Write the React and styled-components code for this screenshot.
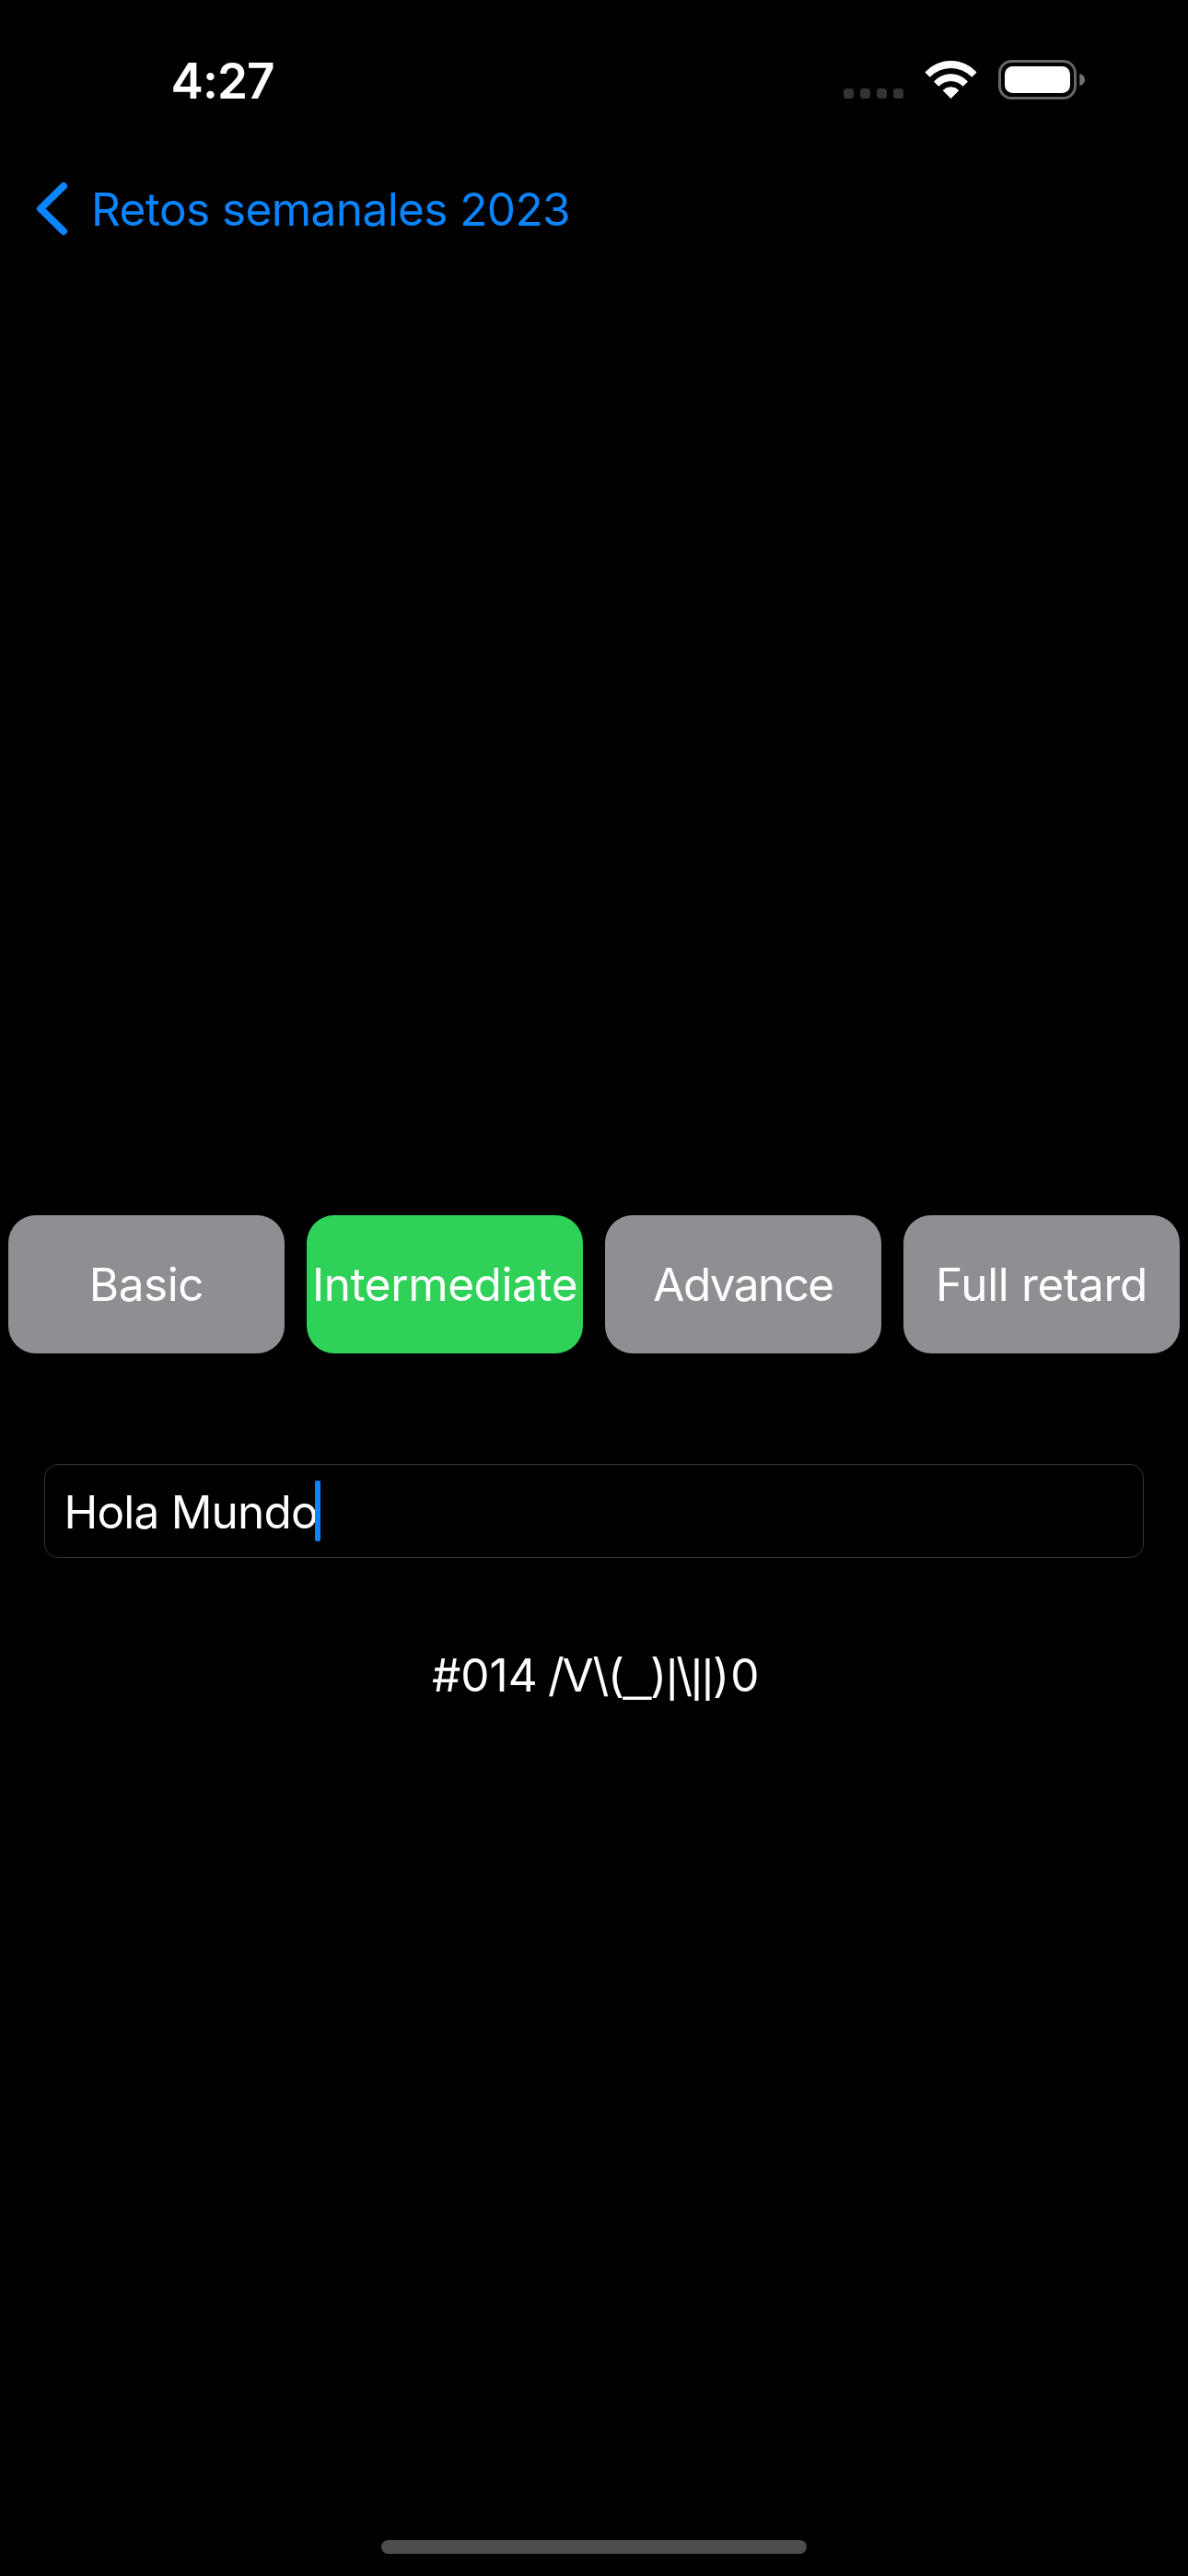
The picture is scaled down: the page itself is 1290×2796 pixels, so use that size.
import React from "react";
import styled, { createGlobalStyle } from "styled-components";

const GlobalStyle = createGlobalStyle`
  *, *::before, *::after { box-sizing: border-box; }
  body {
    margin: 0;
    background: #000;
    color: #fff;
    font-family: Inter, "Liberation Sans", sans-serif;
    font-size: 49.5px;
    font-weight: 400;
  }
`;

const Screen = styled.div`
  display: flex;
  flex-direction: column;
  width: 1290px;
  height: 2796px;
  background: #000;
  overflow: hidden;
`;

const StatusBar = styled.header`
  display: flex;
  align-items: center;
  justify-content: space-between;
  height: 174px;
  padding: 0 111px 0 185.5px;
`;

const Time = styled.time`
  padding-top: 1px;
  font-size: 53px;
  font-weight: 600;
  letter-spacing: -0.9px;
  line-height: 64px;
`;

const StatusIcons = styled.div`
  display: flex;
  align-items: flex-start;
  height: 44px;
`;

const SignalDots = styled.div`
  display: flex;
  gap: 7px;
  margin: 31px 23px 0 0;
`;

const Dot = styled.span`
  width: 11px;
  height: 11px;
  border-radius: 3.5px;
  background: #333;
`;

const WifiSvg = styled.svg`
  display: block;
  width: 57px;
  height: 43px;
  margin-right: 23px;
`;

const BatterySvg = styled.svg`
  display: block;
  width: 95px;
  height: 43px;
`;

const NavBar = styled.nav`
  display: flex;
  align-items: center;
  height: 106px;
  padding-left: 39px;
  color: #0a84ff;
`;

const BackButton = styled.button`
  display: flex;
  align-items: center;
  gap: 25px;
  padding: 0;
  border: 0;
  background: none;
  color: inherit;
  font: inherit;
  letter-spacing: -0.58px;
  line-height: 60px;
  white-space: nowrap;
`;

const ChevronSvg = styled.svg`
  display: block;
  width: 35px;
  height: 60px;
`;

const Main = styled.main`
  display: flex;
  flex-direction: column;
  align-items: center;
  padding-top: 1039px;
`;

const LevelRow = styled.div`
  display: flex;
  gap: 24px;
`;

const LevelButton = styled.button`
  display: flex;
  align-items: center;
  justify-content: center;
  width: 300px;
  height: 150px;
  padding: 0;
  border: 0;
  border-radius: 30px;
  background: ${(p) => (p.$active ? "#30d158" : "#8e8e93")};
  color: #fff;
  font: inherit;
  letter-spacing: ${(p) => p.$tracking}px;
  line-height: 60px;
  white-space: nowrap;
`;

const Field = styled.div`
  display: flex;
  align-items: center;
  width: 1194px;
  height: 102px;
  margin-top: 120px;
  padding-left: 20.5px;
  border: 1px solid #333335;
  border-radius: 15px;
`;

const FieldText = styled.span`
  padding-top: 2px;
  letter-spacing: -0.8px;
  line-height: 60px;
  white-space: nowrap;
`;

const Caret = styled.span`
  width: 6px;
  height: 66px;
  margin-left: -3px;
  border-radius: 2px;
  background: #0a84ff;
`;

const Result = styled.p`
  height: 60px;
  margin: 97px 0 0;
  padding-left: 3.5px;
  font-kerning: none;
  line-height: 60px;
  white-space: pre;
`;

const Run = styled.span`
  letter-spacing: ${(p) => p.$tracking}px;
`;

const Bar = styled(Run)`
  font-family: "Liberation Sans", sans-serif;
  line-height: 0;
`;

const Underscore = styled(Run)`
  font-family: "Liberation Sans", sans-serif;
  font-size: 54px;
  line-height: 0;
  vertical-align: 2px;
`;

const HomeArea = styled.footer`
  display: flex;
  justify-content: center;
  margin-top: auto;
  padding-bottom: 24px;
`;

const HomeIndicator = styled.div`
  width: 462px;
  height: 15px;
  border-radius: 8px;
  background: #4c4c4c;
`;

const levels = [
  { name: "Basic", tracking: -0.45 },
  { name: "Intermediate", tracking: -0.44 },
  { name: "Advance", tracking: -1.6 },
  { name: "Full retard", tracking: -0.35 },
];

function WifiIcon() {
  return (
    <WifiSvg viewBox="0 0 57 43" fill="#fff" stroke="#fff" strokeWidth="1" strokeLinejoin="round">
      <path d="M0.8 13.5A37.7 37.7 0 0 1 56.2 13.5L51.2 18.2A31.5 31.5 0 0 0 5.8 18.2Z" />
      <path d="M10.5 23.6A24.4 24.4 0 0 1 46.5 23.6L41.6 28.3A18 18 0 0 0 15.4 28.3Z" />
      <path d="M20.2 33.2A11.8 11.8 0 0 1 36.8 33.2L28.5 41.6Z" />
    </WifiSvg>
  );
}

function BatteryIcon() {
  return (
    <BatterySvg viewBox="0 0 95 43">
      <rect x="1.5" y="1.5" width="82" height="40" rx="13" fill="none" stroke="#666" strokeWidth="3" />
      <rect x="7" y="7" width="71" height="29" rx="8.5" fill="#fff" />
      <path d="M88.3 14.7C92 15.9 94 18.4 94 21.5C94 24.6 92 27.1 88.3 28.3Z" fill="#747474" />
    </BatterySvg>
  );
}

export default function App() {
  return (
    <>
      <GlobalStyle />
      <Screen>
        <StatusBar>
          <Time>4:27</Time>
          <StatusIcons>
            <SignalDots>
              <Dot />
              <Dot />
              <Dot />
              <Dot />
            </SignalDots>
            <WifiIcon />
            <BatteryIcon />
          </StatusIcons>
        </StatusBar>

        <NavBar>
          <BackButton>
            <ChevronSvg viewBox="0 0 35 60" fill="none" stroke="currentColor" strokeWidth="8" strokeLinecap="round" strokeLinejoin="round">
              <path d="M30 5L5 29.5L30 54" />
            </ChevronSvg>
            Retos semanales 2023
          </BackButton>
        </NavBar>

        <Main>
          <LevelRow>
            {levels.map((level) => (
              <LevelButton key={level.name} $tracking={level.tracking} $active={level.name === "Intermediate"}>
                {level.name}
              </LevelButton>
            ))}
          </LevelRow>
          <Field>
            <FieldText>Hola Mundo</FieldText>
            <Caret />
          </Field>
          <Result>
            #014<Run $tracking={-2.6}> </Run>
            <Run $tracking={-2.3}>/</Run>
            <Run $tracking={-1.2}>V\(</Run>
            <Underscore $tracking={-1}>_</Underscore>
            <Run $tracking={-0.9}>)</Run>
            <Bar $tracking={-1.8}>|</Bar>
            <Run $tracking={-2}>\</Run>
            <Bar $tracking={-0.9}>||</Bar>
            <Run $tracking={1.2}>)</Run>0
          </Result>
        </Main>

        <HomeArea>
          <HomeIndicator />
        </HomeArea>
      </Screen>
    </>
  );
}
